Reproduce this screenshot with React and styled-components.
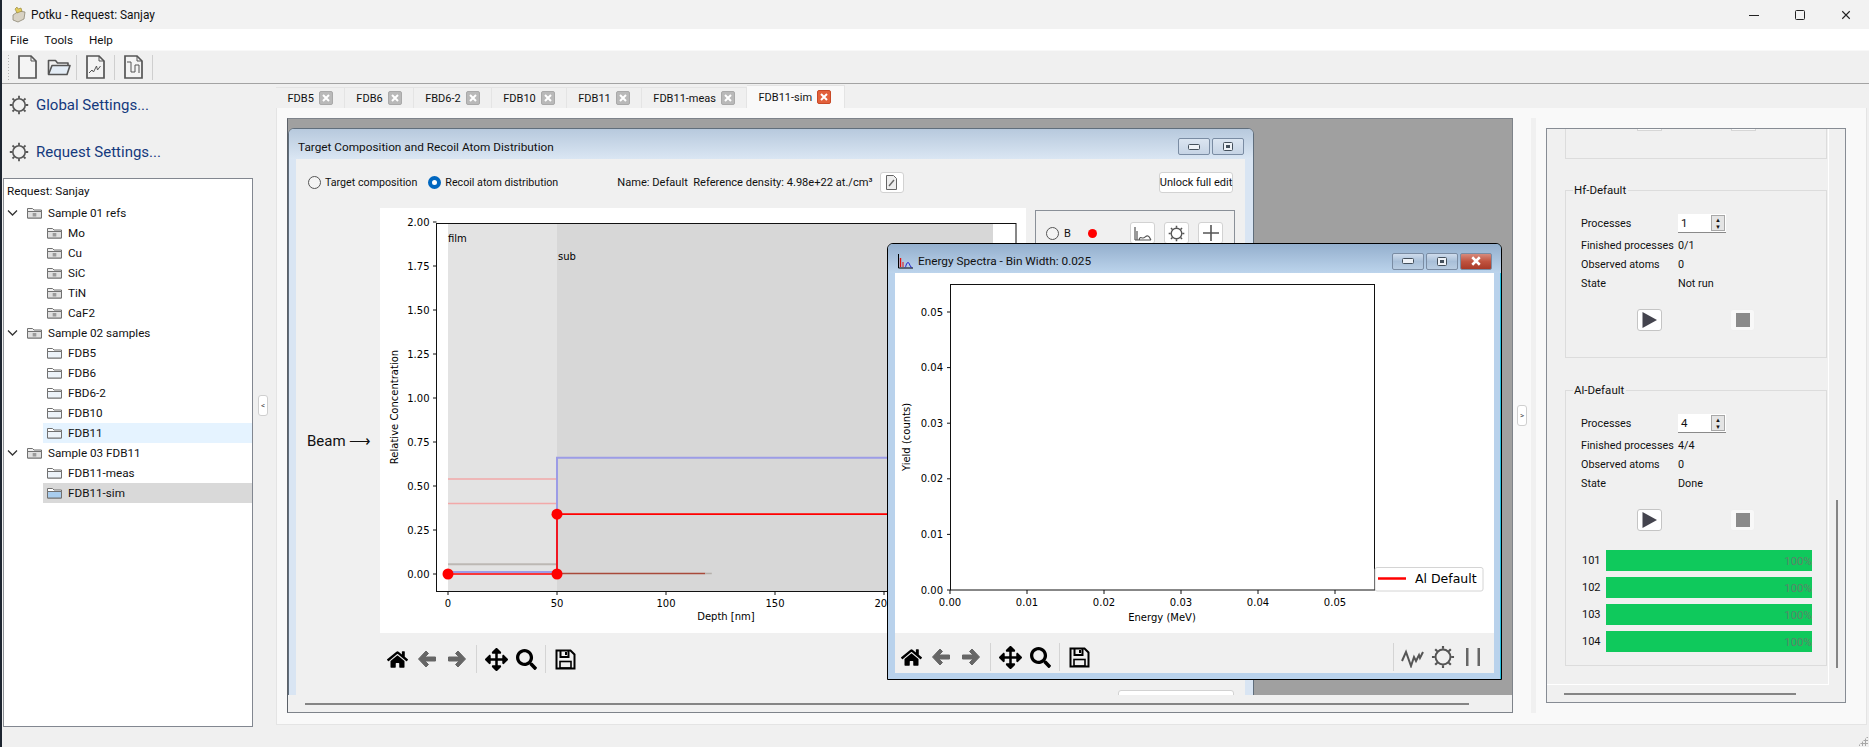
import React from "react";
import styled, { createGlobalStyle } from "styled-components";
import { FaHome, FaArrowsAlt, FaSearch } from "react-icons/fa";

const GlobalStyle = createGlobalStyle`
  html, body {
    margin: 0;
    overflow: hidden;
    background: #f0f0f0;
  }
  * { box-sizing: border-box; }
  #root {
    font-family: Roboto, "Noto Sans", "Liberation Sans", sans-serif;
    font-size: 11.7px;
    color: #111;
  }
`;

const Shell = styled.div`
  width: 1869px;
  height: 747px;
  display: flex;
  flex-direction: column;
  border-left: 2px solid #1d2530;
  overflow: hidden;
  background: #f0f0f0;
`;

/* window chrome */
const TitleBar = styled.div`
  height: 29px;
  flex: none;
  display: flex;
  align-items: center;
  padding-left: 9px;
  gap: 4px;
  background: #f2f2f2;
  font-size: 11.9px;
`;

const CaptionButtons = styled.div`
  margin-left: auto;
  display: flex;
`;

const CaptionButton = styled.div`
  width: 46px;
  height: 29px;
  display: flex;
  align-items: center;
  justify-content: center;
`;

const MenuBar = styled.div`
  height: 21px;
  flex: none;
  display: flex;
  align-items: center;
  gap: 16px;
  padding-left: 8px;
  background: #fff;
  font-size: 11.7px;
`;

const ToolBar = styled.div`
  height: 34px;
  flex: none;
  display: flex;
  align-items: center;
  padding-left: 5px;
  background: #f0f0f0;
  border-top: 1px solid #f8f8f8;
  border-bottom: 1px solid #a3a3a3;
`;

const Grip = styled.div`
  width: 3px;
  height: 26px;
  margin-right: 2px;
  background-image: radial-gradient(#b4b4b4 1px, transparent 1px);
  background-size: 3px 3px;
`;

const ToolSlot = styled.div`
  width: ${(p) => p.$w}px;
  display: flex;
  justify-content: center;
`;

const ToolSep = styled.div`
  width: 1px;
  height: 25px;
  margin: 0 2px;
  background: #cfcfcf;
`;

const Main = styled.div`
  flex: 1;
  min-height: 0;
  display: flex;
`;

/* left side */
const Sidebar = styled.div`
  width: 250px;
  flex: none;
  display: flex;
  flex-direction: column;
  margin-left: 1px;
  padding-bottom: 20px;
`;

const SettingsStack = styled.div`
  height: 94px;
  flex: none;
  display: flex;
  flex-direction: column;
  gap: 23px;
  padding: 9px 0 0 6px;
`;

const SettingsLink = styled.div`
  height: 24px;
  display: flex;
  align-items: center;
  gap: 7px;
  color: #14397d;
  font-size: 15px;
`;

const Tree = styled.div`
  flex: 1;
  background: #fff;
  border: 1px solid #828790;
  border-left-color: #8e9297;
`;

const TreeHeader = styled.div`
  height: 24px;
  padding-left: 3px;
  display: flex;
  align-items: center;
`;

const TreeRow = styled.div`
  height: 20px;
  display: flex;
  align-items: center;
  gap: 6px;
  margin-left: ${(p) => (p.$child ? 39 : 3)}px;
  padding-left: ${(p) => (p.$child ? 4 : 0)}px;
  background: ${(p) =>
    p.$state === "selected" ? "#d9d9d9" : p.$state === "hover" ? "#e5f3ff" : "transparent"};
`;

const Chevron = styled.svg`
  width: 11px;
  height: 8px;
  margin-right: 3px;
`;

const Splitter = styled.div`
  width: ${(p) => p.$w}px;
  flex: none;
  display: flex;
  align-items: center;
  justify-content: ${(p) => (p.$left ? "flex-end" : "center")};
  padding-right: ${(p) => (p.$left ? 8 : 0)}px;
  margin-bottom: ${(p) => (p.$left ? 20 : 0)}px;
`;

const SplitterHandle = styled.div`
  width: 10px;
  height: 21px;
  display: flex;
  align-items: center;
  justify-content: center;
  background: #fff;
  border: 1px solid #cfcfcf;
  border-radius: 3px;
  font-size: 8px;
  line-height: 1;
  color: #444;
`;

/* tabs */
const TabColumn = styled.div`
  flex: 1;
  min-width: 0;
  display: flex;
  flex-direction: column;
  padding: 0 2px 22px 0;
`;

const TabRow = styled.div`
  height: 24px;
  flex: none;
  display: flex;
  align-items: flex-end;
`;

const Tab = styled.div`
  height: ${(p) => (p.$active ? 23 : 21)}px;
  display: flex;
  align-items: center;
  gap: 5px;
  padding: 0 ${(p) => (p.$active ? 13 : 11)}px 0 11.5px;
  background: ${(p) => (p.$active ? "#f9f9f9" : "#f0f0f0")};
  border-right: 1px solid #e4e4e4;
  border-top: 1px solid #e4e4e4;
  font-size: 11px;
`;

const TabClose = styled.div`
  width: 14px;
  height: 14px;
  display: flex;
  align-items: center;
  justify-content: center;
  border-radius: 2px;
  background: ${(p) => (p.$active ? "#e2603b" : "#b9b9b9")};
  border: 1px solid ${(p) => (p.$active ? "#c84a28" : "#a9a9a9")};
`;

const TabPane = styled.div`
  flex: 1;
  min-height: 0;
  display: flex;
  padding: 10px 0 11px 10px;
  background: #f9f9f9;
  border: 1px solid #e4e4e4;
  border-top: 0;
`;

/* mdi area */
const MdiArea = styled.div`
  width: 1226px;
  flex: none;
  display: flex;
  flex-direction: column;
  background: #f0f0f0;
  border: 1px solid #7e838a;
  border-left-color: #5c6168;
`;

const Desktop = styled.div`
  position: relative;
  flex: 1;
  min-height: 0;
  overflow: hidden;
  background: #a0a0a0;
`;

const HScroll = styled.div`
  height: 17px;
  flex: none;
  display: flex;
  align-items: center;
  padding: 0 ${(p) => p.$right}px 0 ${(p) => p.$left}px;
`;

const ScrollThumb = styled.div`
  flex: 1;
  height: 2px;
  background: #858585;
`;

const SubWindow = styled.div`
  position: absolute;
  display: flex;
  flex-direction: column;
  border: 1px solid ${(p) => (p.$active ? "#000" : "#606e7c")};
  border-radius: 6px 6px 0 0;
`;

const TargetWindow = styled(SubWindow)`
  left: 0;
  top: 9px;
  width: 966px;
  height: 640px;
  background: #d9e5f3;
`;

const SpectraWindow = styled(SubWindow)`
  left: 599px;
  top: 124px;
  width: 615px;
  height: 437px;
  background: #b9d2ec;
  border-right-color: #000;
  box-shadow: inset -1px 0 0 #27c0e0;
`;

const WinTitle = styled.div`
  height: ${(p) => (p.$active ? 29 : 30)}px;
  flex: none;
  display: flex;
  align-items: center;
  gap: 5px;
  padding: 5px 9px 0 9px;
  font-size: 11.8px;
  background: ${(p) =>
    p.$active
      ? "linear-gradient(#94afcd, #bcd4ec)"
      : "linear-gradient(#b7c9dd, #dae6f3)"};
  border-radius: 5px 5px 0 0;
`;

const WinButtons = styled.div`
  margin-left: auto;
  display: flex;
  gap: 2px;
`;

const WinButton = styled.div`
  width: 32px;
  height: 17px;
  display: flex;
  align-items: center;
  justify-content: center;
  border: 1px solid #7a8ca3;
  border-radius: 2px;
  background: ${(p) =>
    p.$close
      ? "linear-gradient(#d78a7c 0, #c0533f 50%, #a83a28 100%)"
      : p.$active
      ? "linear-gradient(#cfdcec, #a8bfd8 50%, #b9cde2)"
      : "linear-gradient(#dbe5f1, #c6d4e5)"};
`;

const WinBody = styled.div`
  flex: 1;
  min-height: 0;
  margin: 0 8px 0 7px;
  background: #f0f0f0;
  display: flex;
  flex-direction: column;
`;

const SpectraBody = styled.div`
  width: 599px;
  height: 400px;
  margin-left: 7px;
  background: #fff;
  display: flex;
  flex-direction: column;
`;

const ModeRow = styled.div`
  height: 20px;
  margin-top: 13px;
  flex: none;
  display: flex;
  align-items: center;
  padding: 0 12px;
`;

const RadioLabel = styled.label`
  display: flex;
  align-items: center;
  gap: 4px;
  margin-right: ${(p) => p.$gap || 0}px;
  font-size: 10.7px;
`;

const Radio = styled.span`
  width: 13px;
  height: 13px;
  flex: none;
  border-radius: 50%;
  background: ${(p) => (p.$on ? "#fff" : "#f4f4f4")};
  border: ${(p) => (p.$on ? "4px solid #0067c0" : "1px solid #555")};
`;

const DensityText = styled.span`
  margin-left: 59px;
  font-size: 11.1px;
  white-space: nowrap;
`;

const SmallButton = styled.button`
  height: 21px;
  width: ${(p) => p.$w || 24}px;
  padding: 0;
  display: flex;
  align-items: center;
  justify-content: center;
  background: #fff;
  border: 1px solid #d2d2d2;
  border-radius: 3px;
  font: inherit;
  font-size: 11px;
  color: #111;
  white-space: nowrap;
`;

const DocButton = styled(SmallButton)`
  margin-left: 7px;
`;

const UnlockButton = styled(SmallButton)`
  margin-left: auto;
`;

const ContentRow = styled.div`
  flex: 1;
  min-height: 0;
  display: flex;
  margin-top: 16px;
`;

const BeamColumn = styled.div`
  width: 84px;
  flex: none;
  padding: 224px 0 0 11px;
  font-size: 15px;
  white-space: nowrap;
`;

const ChartColumn = styled.div`
  width: 646px;
  flex: none;
  display: flex;
  flex-direction: column;
`;

const Plot = styled.svg`
  display: block;
  flex: none;
  background: #fff;
  font-family: "DejaVu Sans", sans-serif;
  font-size: 10px;
`;

const NavBar = styled.div`
  height: ${(p) => p.$h}px;
  flex: none;
  display: flex;
  align-items: center;
  padding: ${(p) => p.$pt}px ${(p) => p.$pr || 0}px 0 ${(p) => p.$pl}px;
  background: #f0f0f0;
`;

const NavButton = styled.div`
  width: 30px;
  height: 24px;
  display: flex;
  align-items: center;
  justify-content: center;
  font-size: ${(p) => p.$size || 21}px;
  color: #000;
`;

const NavSep = styled.div`
  width: 1px;
  height: 28px;
  margin: 0 4px;
  background: #d4d4d4;
`;

const NavRight = styled.div`
  margin-left: auto;
  display: flex;
  align-items: center;
`;

const ElementColumn = styled.div`
  width: 200px;
  margin-left: 9px;
  flex: none;
  display: flex;
  flex-direction: column;
  align-items: flex-end;
`;

const ElementBox = styled.div`
  width: 100%;
  height: 470px;
  margin-top: 2px;
  border: 1px solid #8a9098;
  padding: 11px 11px 0 10px;
`;

const ElementRow = styled.div`
  display: flex;
  align-items: center;
  font-size: 11px;
`;

const ElementName = styled.span`
  margin-left: 5px;
`;

const ElementDot = styled.span`
  width: 9px;
  height: 9px;
  margin-left: 17px;
  border-radius: 50%;
  background: #f00;
`;

const ElementTools = styled.div`
  margin-left: auto;
  display: flex;
  gap: 9px;
`;

const ElementButton = styled(SmallButton)`
  width: 25px;
  height: 22px;
`;

const AddButton = styled(SmallButton)`
  width: 116px;
  height: 22px;
  margin-top: 10px;
  margin-right: 1px;
`;

/* simulation dock */
const Dock = styled.div`
  display: flex;
  flex: none;
`;

const DockStrip = styled.div`
  width: 5px;
  margin-right: 10px;
  background: #f0f0f0;
`;

const SimFrame = styled.div`
  width: 300px;
  margin: 10px 0;
  display: flex;
  flex-direction: column;
  background: #f0f0f0;
  border: 1px solid #878c94;
  font-size: 10.8px;
`;

const SimView = styled.div`
  flex: 1;
  min-height: 0;
  display: flex;
`;

const SimContent = styled.div`
  width: 282px;
  flex: none;
  padding-left: 18px;
  border-right: 1px solid #fff;
  border-bottom: 1px solid #fff;
  overflow: hidden;
`;

const VScroll = styled.div`
  flex: 1;
  display: flex;
  flex-direction: column;
  align-items: center;
  padding: 371px 0 17px;
`;

const VThumb = styled.div`
  flex: 1;
  width: 2px;
  background: #858585;
`;

const ClippedGroup = styled.div`
  width: 262px;
  height: 30px;
  display: flex;
  gap: 69px;
  padding-left: 71px;
  border: 1px solid #dcdcdc;
  border-top: 0;
`;

const ClippedButton = styled.div`
  width: 25px;
  height: 2px;
  background: #fbfbfb;
  border: 1px solid #d6d6d6;
  border-top: 0;
`;

const GroupBox = styled.div`
  position: relative;
  width: 262px;
  height: ${(p) => p.$h}px;
  margin-top: ${(p) => p.$gap}px;
  padding: 23px 0 0 15px;
  border: 1px solid #dcdcdc;
`;

const GroupTitle = styled.span`
  position: absolute;
  left: 7px;
  top: -9px;
  padding: 0 2px 0 1px;
  background: #f0f0f0;
  font-size: 11.5px;
  line-height: 16px;
`;

const InfoRow = styled.div`
  height: 19px;
  display: flex;
  align-items: center;
  white-space: nowrap;
`;

const SpinRow = styled(InfoRow)`
  margin-bottom: 3px;
`;

const InfoLabel = styled.span`
  width: 97px;
  flex: none;
`;

const SpinBox = styled.div`
  width: 48px;
  height: 19px;
  display: flex;
  align-items: center;
  justify-content: space-between;
  padding: 0 1px 0 3px;
  background: #fff;
  border-bottom: 1px solid #8a8a8a;
  font-size: 11.5px;
`;

const SpinArrows = styled.div`
  width: 14px;
  height: 16px;
  display: flex;
  flex-direction: column;
  border: 1px solid #a8a8a8;
  background: #e4e4e4;
`;

const SpinArrow = styled.span`
  flex: 1;
  display: flex;
  align-items: center;
  justify-content: center;
  font-size: 6px;
  line-height: 1;
  color: #111;
`;

const RunRow = styled.div`
  display: flex;
  gap: 68px;
  margin: 16px 0 19px 56px;
`;

const RunButton = styled.div`
  width: 25px;
  height: 22px;
  display: flex;
  align-items: center;
  justify-content: center;
  background: ${(p) => (p.$disabled ? "#f8f8f8" : "#fff")};
  border: 1px solid ${(p) => (p.$disabled ? "#efefef" : "#c4c4c4")};
  border-radius: 3px;
`;

const ProcessList = styled.div`
  display: flex;
  flex-direction: column;
  gap: 6px;
`;

const ProcessRow = styled.div`
  display: flex;
  align-items: center;
  padding-left: 1px;
  font-size: 11px;
`;

const ProcessId = styled.span`
  width: 24px;
  flex: none;
`;

const ProgressBar = styled.div`
  width: 206px;
  height: 21px;
  display: flex;
  align-items: center;
  justify-content: flex-end;
  background: #0fc95c;
  color: #5a8569;
  font-size: 11.5px;
`;

const SizeGrip = styled.div`
  position: absolute;
  right: 1px;
  bottom: 1px;
  width: 10px;
  height: 10px;
  background-image: radial-gradient(#a8a8a8 1px, transparent 1.2px);
  background-size: 3px 3px;
  clip-path: polygon(100% 0, 100% 100%, 0 100%);
`;

/* drawings */
const Gear = ({ size = 20, color = "#555" }) => (
  <svg width={size} height={size} viewBox="0 0 20 20" fill="none" stroke={color}>
    <circle cx="10" cy="10" r="6.2" strokeWidth="1.6" />
    <g strokeWidth="1.8">
      <path d="M10 .8v2.400M10 16.800v2.400M.8 10h2.400M16.800 10h2.400M3.500 3.500l1.700 1.700M14.800 14.800l1.700 1.700M3.500 16.500l1.700-1.700M14.800 5.200l1.700-1.700" />
    </g>
  </svg>
);

const DocIcon = ({ children, w = 19, h = 24 }) => (
  <svg width={w} height={h} viewBox="0 0 19 24" fill="#f4f4f4" stroke="#555" strokeWidth="1.7">
    <path d="M1 1h12l5 5v17H1z" />
    <path d="M13 1v5h5" fill="none" strokeWidth="1" />
    {children}
  </svg>
);

const OpenFolder = () => (
  <svg width="24" height="18" viewBox="0 0 24 18" stroke="#555" strokeWidth="1.6" strokeLinejoin="round">
    <path d="M1.500 16V2.500h7l2 2.500H21v3" fill="#f0f0f0" />
    <path d="M1.500 16.500L5 7.500h18l-3 9z" fill="#e4edf6" />
  </svg>
);

const TreeFolder = ({ locked, tone = "#edf3f9" }) => (
  <svg width="15" height="12" viewBox="0 0 15 12" stroke="#707070" strokeWidth="1">
    <path d="M.5 11V1.500h5l1.500 1.500h7.500V11z" fill={locked ? "#efefef" : "#fff"} />
    <path d="M.5 11V4.500h14V11z" fill={locked ? "#dfdfdf" : tone} />
    {locked && <rect x="5.700" y="6" width="3.600" height="3.500" fill="#9a9a9a" stroke="none" />}
  </svg>
);

const AppGlyph = () => (
  <svg width="16" height="17" viewBox="0 0 16 17">
    <path d="M2 9l6-4 6 1-1 7-6 3-5-2z" fill="#d8d2c4" stroke="#8d8674" strokeWidth=".8" />
    <path d="M4 3l2-2 1 2 3-1 1 3-5 2z" fill="#e3cb5a" stroke="#8f7f32" strokeWidth=".6" />
  </svg>
);

const SpectraGlyph = () => (
  <svg width="16" height="16" viewBox="0 0 16 16" fill="none">
    <path d="M1.500 1v14H16" stroke="#000" strokeWidth="1" />
    <path d="M3.500 14V5" stroke="#d11" strokeWidth="1.400" />
    <path d="M6 14V9" stroke="#d11" strokeWidth="1" />
    <path d="M8 14.500c1 0 1-5 3-5s1.500 5 4 5" stroke="#22c" strokeWidth="1" />
  </svg>
);

const CloseMark = ({ size = 8, color = "#fff", width = 2 }) => (
  <svg width={size} height={size} viewBox="0 0 8 8" stroke={color} strokeWidth={width}>
    <path d="M1 1l6 6M7 1L1 7" />
  </svg>
);

const MinMark = () => (
  <svg width="12" height="6" viewBox="0 0 12 6">
    <rect x=".5" y=".5" width="11" height="5" rx="1" fill="#eef2f7" stroke="#44505c" />
  </svg>
);

const RestoreMark = () => (
  <svg width="10" height="9" viewBox="0 0 10 9">
    <rect x=".5" y=".5" width="9" height="8" rx="1" fill="#eef2f7" stroke="#44505c" />
    <rect x="3" y="3" width="4" height="3" fill="#44505c" />
  </svg>
);

const SpectrumMark = () => (
  <svg width="24" height="22" viewBox="0 0 24 22" fill="none" stroke="#555" strokeWidth="2">
    <path d="M1 15l4-9 5 14 3-9 2 4 3-6 1 3 3-6" />
  </svg>
);

const PauseMark = () => (
  <svg width="16" height="18" viewBox="0 0 16 18" fill="#666">
    <rect x="1" y="0" width="2.500" height="18" />
    <rect x="12.500" y="0" width="2.500" height="18" />
  </svg>
);

const BackMark = ({ flip }) => (
  <svg
    width="20"
    height="20"
    viewBox="0 0 20 20"
    fill="#666"
    stroke="#666"
    strokeWidth="1"
    strokeLinejoin="round"
    transform={flip ? "scale(-1 1)" : undefined}
  >
    <path d="M9 2L1.500 10 9 18l2.500-2.500L8 12h10.500V8H8l3.500-3.500z" />
  </svg>
);

const SaveMark = () => (
  <svg width="21" height="21" viewBox="0 0 21 21" fill="none" stroke="#000" strokeWidth="2">
    <path d="M1.500 1.500h14l4 4v14h-18z" />
    <path d="M5.500 2v6h8V2" />
    <rect x="5" y="12.500" width="11" height="6.500" strokeWidth="1.600" />
    <rect x="10" y="3" width="2" height="3" fill="#000" stroke="none" />
  </svg>
);

const NavTools = () => (
  <>
    <NavButton>
      <FaHome />
    </NavButton>
    <NavButton>
      <BackMark />
    </NavButton>
    <NavButton>
      <BackMark flip />
    </NavButton>
    <NavSep />
    <NavButton $size={23}>
      <FaArrowsAlt />
    </NavButton>
    <NavButton>
      <FaSearch />
    </NavButton>
    <NavSep />
    <NavButton>
      <SaveMark />
    </NavButton>
  </>
);

const depthX = (d) => 68 + 2.18 * d;
const concY = (c) => 366 - 176 * c;
const yieldX = (e) => 55 + 7700 * e;
const yieldY = (v) => 317 - 5560 * v;

const TargetPlot = () => (
  <Plot width="646" height="425">
    <rect x={depthX(0)} y="15" width="109" height="368" fill="#e3e3e3" />
    <rect x={depthX(50)} y="15" width="436" height="368" fill="#d7d7d7" />
    <rect x="56.500" y="15.500" width="579.500" height="368" fill="none" stroke="#111" />
    <text x="68" y="34">film</text>
    <text x="178" y="52">sub</text>
    <path d={`M68 ${concY(0.54)}H177M68 ${concY(0.4)}H177`} stroke="#f2a9a9" strokeWidth="1.500" />
    <path d={`M68 ${concY(0.055)}H177`} stroke="#bcb8b4" strokeWidth="2" />
    <path d={`M68 ${concY(0.012)}H177V${concY(0.66)}H613`} fill="none" stroke="#9c9ce6" strokeWidth="2" />
    <path d={`M177 ${concY(0.003)}H${depthX(118)}`} stroke="#a84a3a" strokeWidth="1.500" />
    <path d={`M${depthX(118)} ${concY(0.003)}H${depthX(121)}`} stroke="#b5b0aa" strokeWidth="1.500" />
    <path d={`M68 ${concY(0)}H177V${concY(0.34)}H613`} fill="none" stroke="#f00" strokeWidth="1.700" />
    <circle cx="68" cy={concY(0)} r="5.500" fill="#f00" />
    <circle cx="177" cy={concY(0)} r="5.500" fill="#f00" />
    <circle cx="177" cy={concY(0.34)} r="5.500" fill="#f00" />
    {[0, 0.25, 0.5, 0.75, 1, 1.25, 1.5, 1.75, 2].map((c) => (
      <g key={c}>
        <path d={`M53 ${concY(c)}H56.500`} stroke="#111" />
        <text x="49.500" y={concY(c) + 3.500} textAnchor="end">
          {c.toFixed(2)}
        </text>
      </g>
    ))}
    {[0, 50, 100, 150, 200].map((d) => (
      <g key={d}>
        <path d={`M${depthX(d)} 383v4`} stroke="#111" />
        <text x={depthX(d)} y="399" textAnchor="middle">
          {d}
        </text>
      </g>
    ))}
    <text x="346" y="412" textAnchor="middle">
      Depth [nm]
    </text>
    <text transform="translate(18 199) rotate(-90)" textAnchor="middle">
      Relative Concentration
    </text>
  </Plot>
);

const SpectraPlot = () => (
  <Plot width="599" height="360">
    <rect x="55.500" y="11.500" width="424" height="305.500" fill="none" stroke="#111" />
    {[0, 0.01, 0.02, 0.03, 0.04, 0.05].map((v) => (
      <g key={v}>
        <path d={`M52 ${yieldY(v)}H55.500M${yieldX(v)} 317v4`} stroke="#111" />
        <text x="48" y={yieldY(v) + 3.500} textAnchor="end">
          {v.toFixed(2)}
        </text>
        <text x={yieldX(v)} y="333" textAnchor="middle">
          {v.toFixed(2)}
        </text>
      </g>
    ))}
    <text x="267" y="348" textAnchor="middle">
      Energy (MeV)
    </text>
    <text transform="translate(15 164) rotate(-90)" textAnchor="middle">
      Yield (counts)
    </text>
    <rect x="480" y="294.500" width="108" height="23.500" rx="2" fill="#fff" stroke="#d4d4d4" />
    <path d="M483 305.500h28" stroke="#f00" strokeWidth="2.500" />
    <text x="520" y="310" fontSize="12.500">
      Al Default
    </text>
  </Plot>
);

const samples = [
  { name: "Sample 01 refs", locked: true, items: ["Mo", "Cu", "SiC", "TiN", "CaF2"] },
  { name: "Sample 02 samples", locked: true, items: ["FDB5", "FDB6", "FBD6-2", "FDB10", "FDB11"] },
  { name: "Sample 03 FDB11", locked: true, items: ["FDB11-meas", "FDB11-sim"] },
];

const tabs = ["FDB5", "FDB6", "FBD6-2", "FDB10", "FDB11", "FDB11-meas", "FDB11-sim"];

const itemState = (name) =>
  name === "FDB11" ? "hover" : name === "FDB11-sim" ? "selected" : undefined;

const SimGroup = ({ title, processes, finished, state, height, gap, children }) => (
  <GroupBox $h={height} $gap={gap}>
    <GroupTitle>{title}</GroupTitle>
    <SpinRow>
      <InfoLabel>Processes</InfoLabel>
      <SpinBox>
        {processes}
        <SpinArrows>
          <SpinArrow>▲</SpinArrow>
          <SpinArrow>▼</SpinArrow>
        </SpinArrows>
      </SpinBox>
    </SpinRow>
    <InfoRow>
      <InfoLabel>Finished processes</InfoLabel>
      {finished}
    </InfoRow>
    <InfoRow>
      <InfoLabel>Observed atoms</InfoLabel>0
    </InfoRow>
    <InfoRow>
      <InfoLabel>State</InfoLabel>
      {state}
    </InfoRow>
    <RunRow>
      <RunButton>
        <svg width="15" height="16" viewBox="0 0 15 16">
          <path d="M.5 0L15 8 .5 16z" fill="#44444e" />
        </svg>
      </RunButton>
      <RunButton $disabled>
        <svg width="14" height="14">
          <rect width="14" height="14" fill="#8a8a8a" />
        </svg>
      </RunButton>
    </RunRow>
    {children}
  </GroupBox>
);

const App = () => (
  <Shell>
    <GlobalStyle />
    <TitleBar>
      <AppGlyph />
      Potku - Request: Sanjay
      <CaptionButtons>
        <CaptionButton>
          <svg width="10" height="10" stroke="#222">
            <path d="M0 5.500h10" />
          </svg>
        </CaptionButton>
        <CaptionButton>
          <svg width="10" height="10" fill="none" stroke="#222">
            <rect x=".5" y=".5" width="9" height="9" rx="1" />
          </svg>
        </CaptionButton>
        <CaptionButton>
          <CloseMark size={10} color="#222" width={0.9} />
        </CaptionButton>
      </CaptionButtons>
    </TitleBar>
    <MenuBar>
      <span>File</span>
      <span>Tools</span>
      <span>Help</span>
    </MenuBar>
    <ToolBar>
      <Grip />
      <ToolSlot $w={31}>
        <DocIcon />
      </ToolSlot>
      <ToolSlot $w={31}>
        <OpenFolder />
      </ToolSlot>
      <ToolSep />
      <ToolSlot $w={33}>
        <DocIcon>
          <path d="M3 18l3-3 1.500 2 3-6 1 4 3-4" fill="none" strokeWidth="1" />
        </DocIcon>
      </ToolSlot>
      <ToolSep />
      <ToolSlot $w={33}>
        <DocIcon>
          <path d="M3 7h4v10h4v-7h4v8" fill="none" strokeWidth="1" />
        </DocIcon>
      </ToolSlot>
      <ToolSep />
    </ToolBar>
    <Main>
      <Sidebar>
        <SettingsStack>
          <SettingsLink>
            <Gear />
            Global Settings...
          </SettingsLink>
          <SettingsLink>
            <Gear />
            Request Settings...
          </SettingsLink>
        </SettingsStack>
        <Tree>
          <TreeHeader>Request: Sanjay</TreeHeader>
          {samples.map((sample) => (
            <React.Fragment key={sample.name}>
              <TreeRow>
                <Chevron viewBox="0 0 11 8" fill="none" stroke="#333" strokeWidth="1.300">
                  <path d="M1 1.500l4.500 4.500L10 1.500" />
                </Chevron>
                <TreeFolder locked={sample.locked} />
                {sample.name}
              </TreeRow>
              {sample.items.map((item) => (
                <TreeRow key={item} $child $state={itemState(item)}>
                  <TreeFolder
                    locked={sample.name === "Sample 01 refs"}
                    tone={item === "FDB11-sim" ? "#a9cdee" : "#edf3f9"}
                  />
                  {item}
                </TreeRow>
              ))}
            </React.Fragment>
          ))}
        </Tree>
      </Sidebar>
      <Splitter $w={23} $left>
        <SplitterHandle>&lt;</SplitterHandle>
      </Splitter>
      <TabColumn>
        <TabRow>
          {tabs.map((tab) => (
            <Tab key={tab} $active={tab === "FDB11-sim"}>
              {tab}
              <TabClose $active={tab === "FDB11-sim"}>
                <CloseMark />
              </TabClose>
            </Tab>
          ))}
        </TabRow>
        <TabPane>
          <MdiArea>
            <Desktop>
              <TargetWindow>
                <WinTitle>
                  Target Composition and Recoil Atom Distribution
                  <WinButtons>
                    <WinButton>
                      <MinMark />
                    </WinButton>
                    <WinButton>
                      <RestoreMark />
                    </WinButton>
                  </WinButtons>
                </WinTitle>
                <WinBody>
                  <ModeRow>
                    <RadioLabel $gap={11}>
                      <Radio />
                      Target composition
                    </RadioLabel>
                    <RadioLabel>
                      <Radio $on />
                      Recoil atom distribution
                    </RadioLabel>
                    <DensityText>Name: Default&nbsp; Reference density: 4.98e+22 at./cm³</DensityText>
                    <DocButton>
                      <svg width="11" height="15" viewBox="0 0 11 15" fill="#eee" stroke="#666">
                        <path d="M.5.500h7l3 3v11H.500z" />
                        <path d="M3 11l5-6" strokeWidth="1.400" />
                      </svg>
                    </DocButton>
                    <UnlockButton $w={74}>Unlock full edit</UnlockButton>
                  </ModeRow>
                  <ContentRow>
                    <BeamColumn>Beam ⟶</BeamColumn>
                    <ChartColumn>
                      <TargetPlot />
                      <NavBar $h={50} $pt={2} $pl={2}>
                        <NavTools />
                      </NavBar>
                    </ChartColumn>
                    <ElementColumn>
                      <ElementBox>
                        <ElementRow>
                          <Radio />
                          <ElementName>B</ElementName>
                          <ElementDot />
                          <ElementTools>
                            <ElementButton>
                              <svg width="18" height="16" viewBox="0 0 18 16" fill="none" stroke="#555" strokeWidth="1.200">
                                <path d="M1 15V2M3 15V6M1 15h16M5 15c1-4 2-2 4-2s3-3 5-2 2 3 3 4" />
                              </svg>
                            </ElementButton>
                            <ElementButton>
                              <Gear size={17} />
                            </ElementButton>
                            <ElementButton>
                              <svg width="16" height="16" stroke="#555" strokeWidth="1.600">
                                <path d="M8 0v16M0 8h16" />
                              </svg>
                            </ElementButton>
                          </ElementTools>
                        </ElementRow>
                      </ElementBox>
                      <AddButton />
                    </ElementColumn>
                  </ContentRow>
                </WinBody>
              </TargetWindow>
              <SpectraWindow $active>
                <WinTitle $active>
                  <SpectraGlyph />
                  Energy Spectra - Bin Width: 0.025
                  <WinButtons>
                    <WinButton $active>
                      <MinMark />
                    </WinButton>
                    <WinButton $active>
                      <RestoreMark />
                    </WinButton>
                    <WinButton $active $close>
                      <CloseMark size={10} />
                    </WinButton>
                  </WinButtons>
                </WinTitle>
                <SpectraBody>
                  <SpectraPlot />
                  <NavBar $h={40} $pt={8} $pl={1} $pr={6}>
                    <NavTools />
                    <NavRight>
                      <NavSep />
                      <NavButton>
                        <SpectrumMark />
                      </NavButton>
                      <NavButton>
                        <Gear size={24} />
                      </NavButton>
                      <NavButton>
                        <PauseMark />
                      </NavButton>
                    </NavRight>
                  </NavBar>
                </SpectraBody>
              </SpectraWindow>
            </Desktop>
            <HScroll $left={17} $right={43}>
              <ScrollThumb />
            </HScroll>
          </MdiArea>
          <Splitter $w={18}>
            <SplitterHandle>&gt;</SplitterHandle>
          </Splitter>
          <Dock>
            <DockStrip />
            <SimFrame>
              <SimView>
                <SimContent>
                  <ClippedGroup>
                    <ClippedButton />
                    <ClippedButton />
                  </ClippedGroup>
                  <SimGroup title="Hf-Default" processes="1" finished="0/1" state="Not run" height={168} gap={31} />
                  <SimGroup title="Al-Default" processes="4" finished="4/4" state="Done" height={276} gap={32}>
                    <ProcessList>
                      {["101", "102", "103", "104"].map((id) => (
                        <ProcessRow key={id}>
                          <ProcessId>{id}</ProcessId>
                          <ProgressBar>100%</ProgressBar>
                        </ProcessRow>
                      ))}
                    </ProcessList>
                  </SimGroup>
                </SimContent>
                <VScroll>
                  <VThumb />
                </VScroll>
              </SimView>
              <HScroll $left={17} $right={49}>
                <ScrollThumb />
              </HScroll>
            </SimFrame>
          </Dock>
        </TabPane>
        <SizeGrip />
      </TabColumn>
    </Main>
  </Shell>
);

export default App;
